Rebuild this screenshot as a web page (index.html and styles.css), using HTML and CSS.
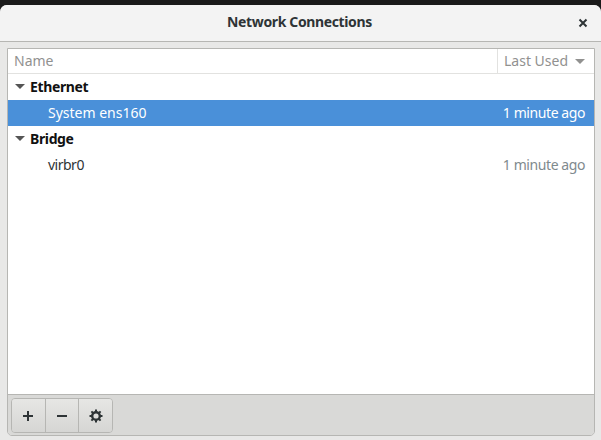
FILE: index.html
```html
<!DOCTYPE html>
<html lang="en">
<head>
    <meta charset="UTF-8">
    <title>Network Connections</title>
    <link rel="stylesheet" href="styles.css">
</head>
<body>
    <div class="window">
        <header class="titlebar">
            <span class="title">Network Connections</span>
            <svg class="close" width="10" height="10" viewBox="0 0 10 10"><path d="M1.5 1.5l7 7M8.500 1.500l-7 7" stroke="#2e3436" stroke-width="2"/></svg>
        </header>
        <div class="content">
            <div class="frame">
                <div class="list">
                    <div class="list-head">
                        <div class="col-name">Name</div>
                        <div class="col-used">Last Used <span class="arrow small"></span></div>
                    </div>
                    <div class="row group"><span class="arrow"></span>Ethernet</div>
                    <div class="row item selected"><span>System ens160</span><span class="when">1 minute ago</span></div>
                    <div class="row group"><span class="arrow"></span>Bridge</div>
                    <div class="row item"><span class="tight">virbr0</span><span class="when">1 minute ago</span></div>
                </div>
                <div class="toolbar">
                    <div class="btn-group">
                        <button class="btn"><svg width="12" height="12" viewBox="0 0 12 12"><path d="M6 1v10M1 6h10" stroke="#2e3436" stroke-width="2"/></svg></button>
                        <button class="btn"><svg width="12" height="12" viewBox="0 0 12 12"><path d="M1 6h10" stroke="#2e3436" stroke-width="2"/></svg></button>
                        <button class="btn"><svg width="14" height="14" viewBox="0 0 14 14"><circle cx="7" cy="7" r="3.800" fill="none" stroke="#2e3436" stroke-width="2.400"/><path d="M7 .5v3M7 10.500v3M.5 7h3M10.500 7h3M2.400 2.400l2.100 2.100M9.500 9.500l2.100 2.100M11.600 2.400L9.500 4.500M4.500 9.500l-2.100 2.100" stroke="#2e3436" stroke-width="2"/></svg></button>
                    </div>
                </div>
            </div>
        </div>
    </div>
</body>
</html>
```

FILE: styles.css
```css
* {
    box-sizing: border-box;
}

html, body {
    height: 100%;
}

body {
    margin: 0;
    background: #1a1a1a;
    padding-top: 5px;
    font-family: 'Noto Sans', sans-serif;
    font-size: 14px;
    color: #2e3436;
    overflow: hidden;
}

.window {
    height: 435px;
    display: flex;
    flex-direction: column;
    border-radius: 7px 7px 0 0;
    overflow: hidden;
    background: #e8e8e7;
}

.titlebar {
    height: 37px;
    flex: none;
    display: flex;
    align-items: center;
    justify-content: center;
    position: relative;
    padding: 0 2px 3px 0;
    background: #f3f3f3;
    border-bottom: 1px solid #b6b6b3;
}

.title {
    font-weight: 700;
    letter-spacing: -0.37px;
}

.close {
    position: absolute;
    right: 13px;
    top: 13px;
}

.content {
    flex: 1;
    padding: 6px 6px 4px 7px;
    display: flex;
}

.frame {
    flex: 1;
    display: flex;
    flex-direction: column;
    border: 1px solid #b6b6b3;
    border-radius: 0 0 5px 5px;
    overflow: hidden;
}

.list {
    flex: 1;
    background: #fff;
}

.list-head {
    display: flex;
    height: 25px;
    border-bottom: 1px solid #e2e2e0;
    color: #919190;
    line-height: 23px;
}

.col-name {
    flex: 1;
    padding-left: 6px;
}

.col-used {
    width: 97px;
    padding-left: 6px;
    border-left: 1px solid #e2e2e0;
    white-space: nowrap;
}

.row {
    display: flex;
    align-items: center;
    height: 26px;
    white-space: nowrap;
}

.group {
    font-weight: 700;
    letter-spacing: -0.37px;
    color: #111;
    padding: 0 0 2px 7px;
}

.item {
    justify-content: space-between;
    padding: 0 9px 2px 40px;
}

.tight {
    letter-spacing: -0.5px;
}

.when {
    letter-spacing: -0.42px;
    color: #7f8a8e;
}

.selected {
    background: #4a90d9;
    color: #fff;
}

.selected .when {
    color: #fff;
}

.arrow {
    display: inline-block;
    width: 0;
    height: 0;
    border-left: 5px solid transparent;
    border-right: 5px solid transparent;
    border-top: 5px solid #555;
    margin-right: 5px;
}

.arrow.small {
    border-top-color: #919190;
    margin: 0 0 2px 3px;
    vertical-align: middle;
}

.toolbar {
    height: 41px;
    flex: none;
    padding: 3px 3px;
    background: #d9d9d7;
    border-top: 1px solid #b6b6b3;
}

.btn-group {
    display: flex;
    width: 102px;
    height: 35px;
    border: 1px solid #b6b6b3;
    border-radius: 4px;
    overflow: hidden;
}

.btn {
    flex: 1;
    display: flex;
    align-items: center;
    justify-content: center;
    padding: 0;
    border: 0;
    border-right: 1px solid #b6b6b3;
    background: linear-gradient(#e6e6e4, #d6d6d4);
}

.btn:last-child {
    border-right: 0;
}
```
